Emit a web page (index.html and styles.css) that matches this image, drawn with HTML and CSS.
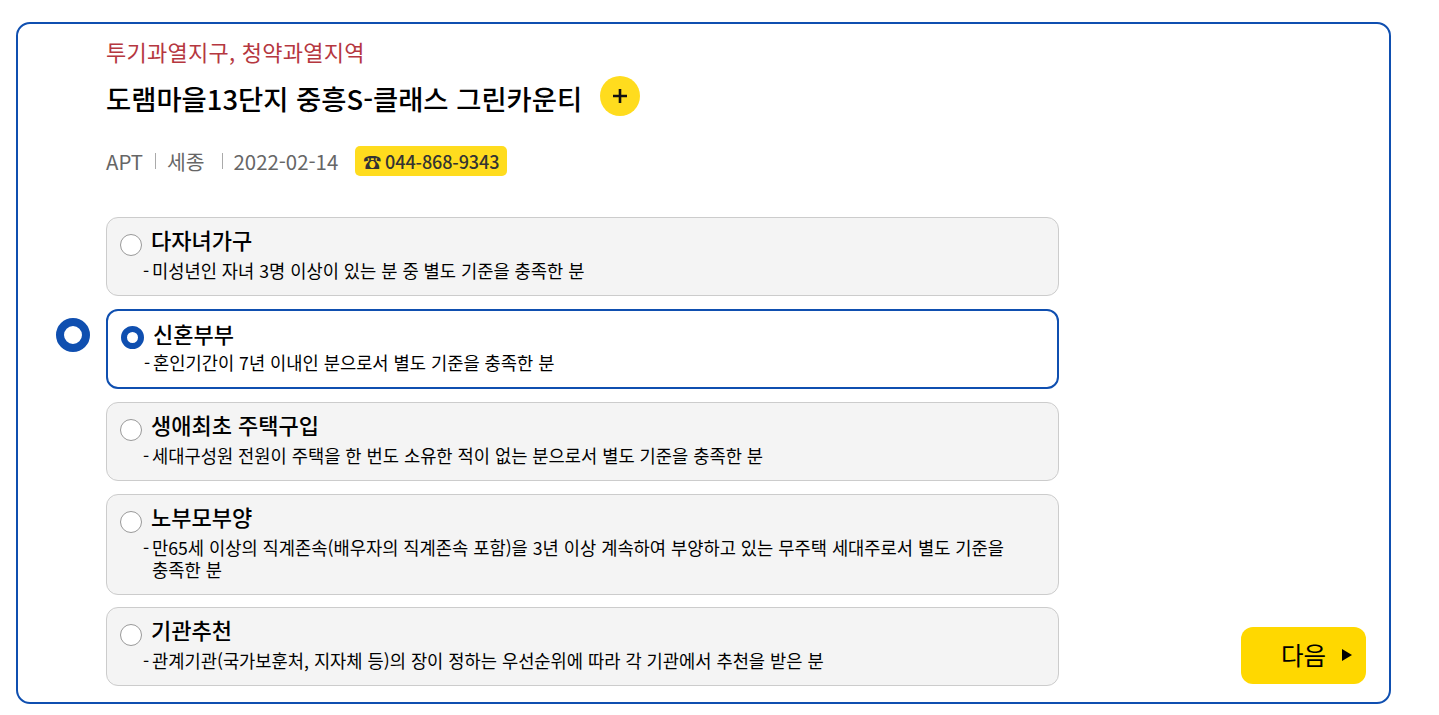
FILE: index.html
```html
<!DOCTYPE html>
<html lang="ko">
<head>
    <meta charset="UTF-8">
    <meta name="viewport" content="width=device-width, initial-scale=1.0">
    <title>특별공급 선택</title>
    <link rel="stylesheet" href="styles.css">
</head>
<body>
    <div class="card">
        <div class="content">
            <p class="area">투기과열지구, 청약과열지역</p>
            <div class="title-row">
                <h2 class="title">도램마을13단지 중흥S-클래스 그린카운티</h2>
                <button class="plus">
                    <svg width="16" height="16" viewBox="0 0 16 16"><path d="M8 1V15M1 8H15" stroke="#111" stroke-width="2.600" fill="none"/></svg>
                </button>
            </div>
            <div class="meta">
                <span class="meta-item">APT</span>
                <span class="meta-item">세종</span>
                <span class="meta-item">2022-02-14</span>
                <a class="tel">☎ 044-868-9343</a>
            </div>
            <ul class="options">
                <li class="option">
                    <div class="option-head"><span class="radio"></span><strong>다자녀가구</strong></div>
                    <p class="desc">미성년인 자녀 3명 이상이 있는 분 중 별도 기준을 충족한 분</p>
                </li>
                <li class="option selected">
                    <span class="marker"></span>
                    <div class="option-head"><span class="radio"></span><strong>신혼부부</strong></div>
                    <p class="desc">혼인기간이 7년 이내인 분으로서 별도 기준을 충족한 분</p>
                </li>
                <li class="option">
                    <div class="option-head"><span class="radio"></span><strong>생애최초 주택구입</strong></div>
                    <p class="desc">세대구성원 전원이 주택을 한 번도 소유한 적이 없는 분으로서 별도 기준을 충족한 분</p>
                </li>
                <li class="option">
                    <div class="option-head"><span class="radio"></span><strong>노부모부양</strong></div>
                    <p class="desc">만65세 이상의 직계존속(배우자의 직계존속 포함)을 3년 이상 계속하여 부양하고 있는 무주택 세대주로서 별도 기준을 충족한 분</p>
                </li>
                <li class="option">
                    <div class="option-head"><span class="radio"></span><strong>기관추천</strong></div>
                    <p class="desc">관계기관(국가보훈처, 지자체 등)의 장이 정하는 우선순위에 따라 각 기관에서 추천을 받은 분</p>
                </li>
            </ul>
        </div>
        <button class="next">다음<span class="arrow"></span></button>
    </div>
</body>
</html>
```

FILE: styles.css
```css
* {
    box-sizing: border-box;
}
html, body {
    height: 100%;
}
body {
    margin: 0;
    padding: 22px 48px 11px 16px;
    background-color: #fff;
    color: #000;
    font-family: "Noto Sans CJK KR", "Noto Sans", sans-serif;
    overflow: hidden;
}
.card {
    display: flex;
    justify-content: space-between;
    align-items: flex-end;
    height: 682px;
    padding: 12px 23px 18px 88px;
    border: 2px solid #0f4fb0;
    border-radius: 14px;
}
.content {
    width: 953px;
    align-self: flex-start;
}
.area {
    margin: 0;
    color: #b5373f;
    font-size: 22px;
    line-height: 30px;
    letter-spacing: 0.25px;
}
.title-row {
    display: flex;
    align-items: flex-start;
    gap: 18px;
    margin-top: 10px;
}
.title {
    margin: 0;
    font-size: 27.400px;
    font-weight: 500;
    line-height: 44px;
}
.plus {
    display: flex;
    align-items: center;
    justify-content: center;
    width: 40px;
    height: 40px;
    padding: 0;
    border: none;
    border-radius: 50%;
    background-color: #ffdc1e;
}
.meta {
    display: flex;
    align-items: center;
    height: 30px;
    margin-top: 26px;
    color: #666;
    font-size: 20.400px;
    line-height: 30px;
}
.meta-item + .meta-item {
    margin-left: 12px;
    padding-left: 12px;
    background: linear-gradient(#aaa, #aaa) left center / 1px 16px no-repeat;
}
.meta-item:nth-child(3) {
    margin-left: 17px;
}
.tel {
    margin-left: 17px;
    padding: 0 8px;
    border-radius: 5px;
    background-color: #ffdc1e;
    color: #333;
    font-size: 18px;
    font-weight: 500;
    line-height: 30px;
    letter-spacing: -0.1px;
}
.options {
    display: flex;
    flex-direction: column;
    gap: 12.850px;
    margin: 41px 0 0;
    padding: 0;
    list-style: none;
}
.option {
    position: relative;
    padding: 5px 20px 13px 13px;
    border: 1px solid #ccc;
    border-radius: 12px;
    background-color: #f4f4f4;
}
.option.selected {
    padding: 6px 20px 13px 13px;
    border: 2px solid #0f4fb0;
    background-color: #fff;
}
.option-head {
    display: flex;
    align-items: center;
    gap: 9px;
    height: 32px;
}
.option-head strong {
    font-size: 22px;
    font-weight: 500;
}
.radio {
    flex: none;
    width: 22px;
    height: 22px;
    margin-top: 12px;
    border: 1px solid #999;
    border-radius: 50%;
    background-color: #fff;
}
.selected .radio {
    width: 23px;
    height: 23px;
    margin-top: 9px;
    border: 6px solid #0f4fb0;
}
.marker {
    position: absolute;
    left: -52px;
    top: 7px;
    width: 34px;
    height: 34px;
    border: 8.500px solid #0f4fb0;
    border-radius: 50%;
    background-color: #fff;
}
.desc {
    position: relative;
    margin: 5px 0 0 23px;
    padding-left: 9px;
    font-size: 17.650px;
    line-height: 22px;
    word-break: keep-all;
}
.selected .desc {
    margin-top: 3px;
}
.desc::before {
    content: "-";
    position: absolute;
    left: 0;
}
.next {
    display: flex;
    align-items: center;
    justify-content: flex-end;
    gap: 16px;
    width: 125px;
    height: 57px;
    padding: 0 14px 2px 0;
    border: none;
    border-radius: 12px;
    background-color: #ffd800;
    color: #000;
    font-family: inherit;
    font-size: 24.500px;
}
.arrow {
    width: 0;
    height: 0;
    border-left: 10px solid #000;
    border-top: 6px solid transparent;
    border-bottom: 6px solid transparent;
}
```
